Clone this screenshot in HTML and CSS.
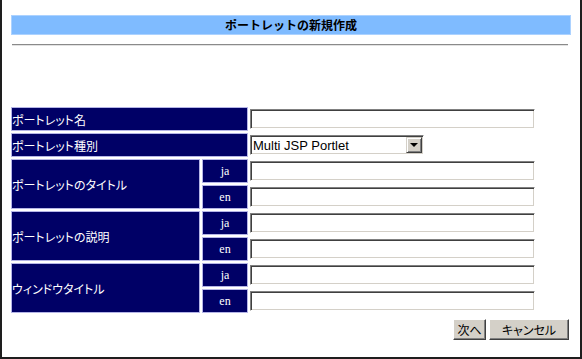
FILE: index.html
```html
<!DOCTYPE html>
<html lang="ja">
<head>
    <meta charset="UTF-8">
    <title>ポートレットの新規作成</title>
    <link rel="stylesheet" href="styles.css">
</head>
<body>
    <div class="window">
        <div class="page-title">ポートレットの新規作成</div>
        <div class="rule"></div>

        <form class="portlet-form">
            <div class="label wide">ポートレット名</div>
            <div class="field"><input type="text" class="text-input"></div>

            <div class="label wide">ポートレット種別</div>
            <div class="field">
                <span class="select-box">
                    <select class="select-input">
                        <option>Multi JSP Portlet</option>
                    </select>
                    <span class="select-btn"></span>
                </span>
            </div>

            <div class="label tall">ポートレットのタイトル</div>
            <div class="lang">ja</div>
            <div class="field"><input type="text" class="text-input"></div>
            <div class="lang">en</div>
            <div class="field"><input type="text" class="text-input"></div>

            <div class="label tall">ポートレットの説明</div>
            <div class="lang">ja</div>
            <div class="field"><input type="text" class="text-input"></div>
            <div class="lang">en</div>
            <div class="field"><input type="text" class="text-input"></div>

            <div class="label tall">ウィンドウタイトル</div>
            <div class="lang">ja</div>
            <div class="field"><input type="text" class="text-input"></div>
            <div class="lang">en</div>
            <div class="field"><input type="text" class="text-input"></div>
        </form>

        <div class="actions">
            <button type="button" class="btn btn-next">次へ</button>
            <button type="button" class="btn btn-cancel">キャンセル</button>
        </div>
    </div>
</body>
</html>
```

FILE: styles.css
```css
* {
    margin: 0;
    padding: 0;
    box-sizing: border-box;
}

body {
    font-family: "Noto Sans CJK JP", "Noto Sans", sans-serif;
    font-size: 12px;
    background: #fff;
}

.window {
    width: 582px;
    height: 359px;
    border-left: 2px solid #1e1e1e;
    border-right: 2px solid #1e1e1e;
    border-bottom: 2px solid #1e1e1e;
    padding: 15px 9px 0 9px;
    background: #fff;
}

.page-title {
    height: 20px;
    line-height: 18px;
    background: #7fbbff;
    border: 1px solid #acd2ff;
    text-align: center;
    font-weight: bold;
    font-size: 12px;
    color: #000;
}

.rule {
    height: 2px;
    margin: 9px 3px 0 1px;
    border-top: 1px solid #8a8a8a;
    border-bottom: 1px solid #e2e2e2;
}

.portlet-form {
    display: grid;
    grid-template-columns: 189px 46px 1fr;
    grid-auto-rows: 24px;
    gap: 2px;
    margin-top: 61px;
}

.label,
.lang {
    background: #000066;
    border: 1px solid #b4b4e6;
    color: #fff;
    display: flex;
    align-items: center;
}

.label {
    font-feature-settings: "palt";
    white-space: nowrap;
}

.label.wide {
    grid-column: 1 / 3;
}

.label.tall {
    grid-column: 1;
    grid-row: span 2;
}

.lang {
    justify-content: center;
    font-family: "Liberation Serif", "DejaVu Serif", serif;
    font-size: 12px;
}

.field {
    display: flex;
    align-items: center;
}

.text-input {
    width: 285px;
    height: 20px;
    border: 1px solid;
    border-color: #808080 #ffffff #ffffff #808080;
    box-shadow: inset 1px 1px 0 #404040, inset -1px -1px 0 #d4d0c8;
    background: #fff;
    font-size: 12px;
    outline: none;
}

.select-box {
    position: relative;
    display: inline-block;
    width: 174px;
    height: 20px;
}

.select-input {
    appearance: none;
    -webkit-appearance: none;
    width: 100%;
    height: 20px;
    border: 1px solid;
    border-color: #808080 #ffffff #ffffff #808080;
    box-shadow: inset 1px 1px 0 #404040, inset -1px -1px 0 #d4d0c8;
    background: #fff;
    font-family: "Liberation Sans", Arial, sans-serif;
    font-size: 13px;
    padding-left: 2px;
    color: #000;
    border-radius: 0;
    outline: none;
}

.select-btn {
    position: absolute;
    top: 2px;
    right: 2px;
    width: 16px;
    height: 16px;
    background: #d4d0c8;
    border: 1px solid;
    border-color: #d4d0c8 #404040 #404040 #d4d0c8;
    box-shadow: inset 1px 1px 0 #fff, inset -1px -1px 0 #808080;
}

.select-btn::after {
    content: "";
    position: absolute;
    left: 3px;
    top: 5px;
    border-left: 4px solid transparent;
    border-right: 4px solid transparent;
    border-top: 4px solid #000;
}

.actions {
    display: flex;
    justify-content: flex-end;
    gap: 3px;
    margin-top: 6px;
    padding-right: 2px;
}

.btn {
    height: 21px;
    background: #d4d0c8;
    border: 1px solid;
    border-color: #ffffff #404040 #404040 #ffffff;
    box-shadow: inset -1px -1px 0 #808080;
    font-family: "Noto Sans CJK JP", sans-serif;
    font-feature-settings: "palt";
    font-size: 12px;
    color: #000;
    line-height: 17px;
    cursor: pointer;
}

.btn-next {
    width: 33px;
}

.btn-cancel {
    width: 80px;
}
```
